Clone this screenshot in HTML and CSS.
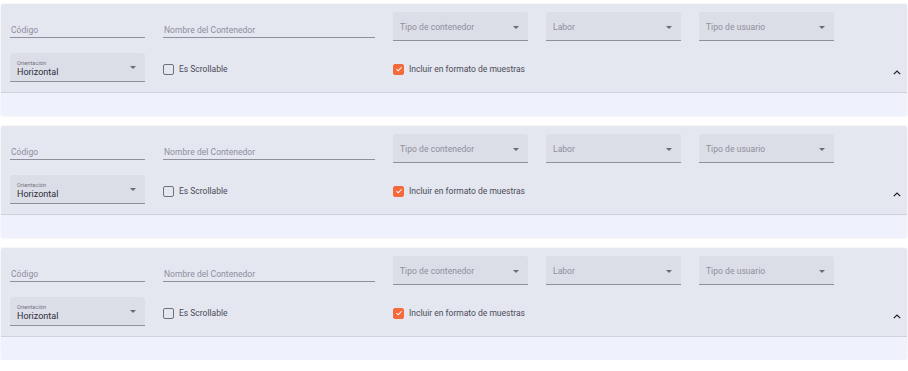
FILE: index.html
```html
<!DOCTYPE html>
<html lang="es">
<head>
<meta charset="utf-8">
<link rel="stylesheet" href="styles.css">
</head>
<body>
<div class="list">
  <section class="card">
    <div class="head">
      <div class="grid">
        <div class="text-field"><span class="ph">Código</span></div>
        <div class="text-field"><span class="ph">Nombre del Contenedor</span></div>
        <div class="select"><span class="ph">Tipo de contenedor</span><span class="arrow"></span></div>
        <div class="select"><span class="ph">Labor</span><span class="arrow"></span></div>
        <div class="select"><span class="ph">Tipo de usuario</span><span class="arrow"></span></div>
        <div class="select filled"><div class="vals"><span class="small">Orientación</span><span class="val">Horizontal</span></div><span class="arrow"></span></div>
        <label class="check"><span class="box"></span><span class="lbl">Es Scrollable</span></label>
        <label class="check wide"><span class="box on"><svg viewBox="0 0 10 10" width="8" height="8"><path d="M1.8 5.2 L4 7.2 L8.2 2.8" fill="none" stroke="#fff" stroke-width="1.3"/></svg></span><span class="lbl">Incluir en formato de muestras</span></label>
      </div>
      <svg class="chev" viewBox="0 0 10 6" width="8" height="5"><path d="M1 5 L5 1.2 L9 5" fill="none" stroke="#222" stroke-width="1.6"/></svg>
    </div>
    <div class="foot"></div>
  </section>
  <section class="card">
    <div class="head">
      <div class="grid">
        <div class="text-field"><span class="ph">Código</span></div>
        <div class="text-field"><span class="ph">Nombre del Contenedor</span></div>
        <div class="select"><span class="ph">Tipo de contenedor</span><span class="arrow"></span></div>
        <div class="select"><span class="ph">Labor</span><span class="arrow"></span></div>
        <div class="select"><span class="ph">Tipo de usuario</span><span class="arrow"></span></div>
        <div class="select filled"><div class="vals"><span class="small">Orientación</span><span class="val">Horizontal</span></div><span class="arrow"></span></div>
        <label class="check"><span class="box"></span><span class="lbl">Es Scrollable</span></label>
        <label class="check wide"><span class="box on"><svg viewBox="0 0 10 10" width="8" height="8"><path d="M1.8 5.2 L4 7.2 L8.2 2.8" fill="none" stroke="#fff" stroke-width="1.3"/></svg></span><span class="lbl">Incluir en formato de muestras</span></label>
      </div>
      <svg class="chev" viewBox="0 0 10 6" width="8" height="5"><path d="M1 5 L5 1.2 L9 5" fill="none" stroke="#222" stroke-width="1.6"/></svg>
    </div>
    <div class="foot"></div>
  </section>
  <section class="card">
    <div class="head">
      <div class="grid">
        <div class="text-field"><span class="ph">Código</span></div>
        <div class="text-field"><span class="ph">Nombre del Contenedor</span></div>
        <div class="select"><span class="ph">Tipo de contenedor</span><span class="arrow"></span></div>
        <div class="select"><span class="ph">Labor</span><span class="arrow"></span></div>
        <div class="select"><span class="ph">Tipo de usuario</span><span class="arrow"></span></div>
        <div class="select filled"><div class="vals"><span class="small">Orientación</span><span class="val">Horizontal</span></div><span class="arrow"></span></div>
        <label class="check"><span class="box"></span><span class="lbl">Es Scrollable</span></label>
        <label class="check wide"><span class="box on"><svg viewBox="0 0 10 10" width="8" height="8"><path d="M1.8 5.2 L4 7.2 L8.2 2.8" fill="none" stroke="#fff" stroke-width="1.3"/></svg></span><span class="lbl">Incluir en formato de muestras</span></label>
      </div>
      <svg class="chev" viewBox="0 0 10 6" width="8" height="5"><path d="M1 5 L5 1.2 L9 5" fill="none" stroke="#222" stroke-width="1.6"/></svg>
    </div>
    <div class="foot"></div>
  </section>
</div>
</body>
</html>
```

FILE: styles.css
```css
* { box-sizing: border-box; }
body {
  margin: 0;
  background: #ffffff;
  font-family: Roboto, "Liberation Sans", Arial, sans-serif;
}
.list {
  display: flex;
  flex-direction: column;
  gap: 10px;
  padding: 4px 1px 0 1px;
}
.card {
  display: flex;
  flex-direction: column;
  box-shadow: 0 0 2px rgba(0,0,0,0.12);
  border-radius: 2px;
  overflow: hidden;
}
.head {
  height: 89px;
  background: #e4e6f0;
  padding: 8px 0 0 9px;
  display: flex;
  border-bottom: 1px solid #cfd1db;
}
.foot {
  height: 23px;
  background: #eff1fc;
}
.grid {
  display: grid;
  grid-template-columns: 135px 212px 135px 135px 135px;
  grid-template-rows: 29px 29px;
  column-gap: 18px;
  row-gap: 12px;
}
.text-field {
  border-bottom: 1px solid #8f909a;
  height: 26px;
  display: flex;
  align-items: flex-end;
  padding: 0 0 2px 1px;
}
.ph {
  font-size: 8.5px;
  color: #8d8e9c;
  letter-spacing: 0.05px;
  white-space: nowrap;
}
.select {
  background: #dcdee7;
  border-bottom: 1px solid #8f909a;
  border-radius: 3px 3px 0 0;
  display: flex;
  align-items: center;
  justify-content: space-between;
  padding: 2px 9px 0 7px;
}
.arrow {
  width: 0;
  height: 0;
  border-left: 3.5px solid transparent;
  border-right: 3.5px solid transparent;
  border-top: 3.5px solid #6a6b75;
}
.filled { padding: 1px 9px 0 7px; }
.vals {
  display: flex;
  flex-direction: column;
  gap: 1px;
  padding-top: 2px;
}
.small {
  font-size: 5.5px;
  color: #6f707c;
  letter-spacing: 0.1px;
}
.val {
  font-size: 9px;
  color: #2c2d36;
}
.check {
  display: flex;
  align-items: center;
  gap: 5px;
  padding-top: 3px;
  white-space: nowrap;
}
.check.wide { grid-column: span 2; }
.box {
  width: 11px;
  height: 11px;
  border: 1.3px solid #707079;
  border-radius: 2px;
  display: flex;
  align-items: center;
  justify-content: center;
}
.box.on {
  background: #f36b3b;
  border-color: #f36b3b;
}
.lbl {
  font-size: 8.5px;
  color: #4b4c57;
}
.chev {
  margin-left: auto;
  margin-right: 6px;
  margin-top: 58px;
}
```
